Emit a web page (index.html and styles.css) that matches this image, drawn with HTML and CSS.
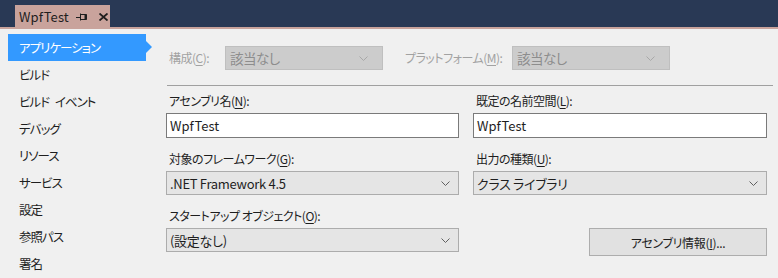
FILE: index.html
```html
<!DOCTYPE html>
<html lang="ja">
  <head>
    <meta charset="UTF-8" />
    <title>WpfTest</title>
    <link rel="stylesheet" href="styles.css">
  </head>
  <body>
    <header class="tab-bar">
      <div class="doc-tab">
        <span class="tab-title">WpfTest</span>
        <svg class="pin" width="12" height="8" viewBox="0 0 12 8">
          <path d="M0 4.5H4M4.5 0.5V7.5M4.5 1.5H10.5V6.5H4.5" fill="none" stroke="#1e1e1e" stroke-width="1"/>
          <path d="M9.5 1.5V6.5" stroke="#1e1e1e" stroke-width="2"/>
        </svg>
        <svg class="close" width="9" height="8" viewBox="0 0 9 8">
          <path d="M0.5 0.5L8.5 7.5M8.5 0.5L0.5 7.5" stroke="#1e1e1e" stroke-width="1.8"/>
        </svg>
      </div>
    </header>

    <div class="page">
      <ul class="side-nav">
        <li class="active">アプリケーション</li>
        <li>ビルド</li>
        <li>ビルド イベント</li>
        <li>デバッグ</li>
        <li>リソース</li>
        <li>サービス</li>
        <li>設定</li>
        <li>参照パス</li>
        <li>署名</li>
      </ul>

      <main class="settings">
        <div class="config-row">
          <span class="label disabled">構成(<u>C</u>):</span>
          <div class="combo combo-disabled config-combo">
            <span>該当なし</span>
            <svg class="chev" width="9" height="5" viewBox="0 0 9 5"><path d="M0.5 0.5L4.5 4.5L8.5 0.5" fill="none" stroke="#a8a8a8"/></svg>
          </div>
          <span class="label disabled platform">プラットフォーム(<u>M</u>):</span>
          <div class="combo combo-disabled config-combo">
            <span>該当なし</span>
            <svg class="chev" width="9" height="5" viewBox="0 0 9 5"><path d="M0.5 0.5L4.5 4.5L8.5 0.5" fill="none" stroke="#a8a8a8"/></svg>
          </div>
        </div>

        <hr class="separator" />

        <div class="fields">
          <div class="field">
            <label class="label">アセンブリ名(<u>N</u>):</label>
            <div class="textbox">WpfTest</div>
          </div>
          <div class="field">
            <label class="label">既定の名前空間(<u>L</u>):</label>
            <div class="textbox">WpfTest</div>
          </div>
          <div class="field">
            <label class="label">対象のフレームワーク(<u>G</u>):</label>
            <div class="combo">
              <span>.NET Framework 4.5</span>
              <svg class="chev" width="9" height="5" viewBox="0 0 9 5"><path d="M0.5 0.5L4.5 4.5L8.5 0.5" fill="none" stroke="#606060"/></svg>
            </div>
          </div>
          <div class="field">
            <label class="label">出力の種類(<u>U</u>):</label>
            <div class="combo">
              <span>クラス ライブラリ</span>
              <svg class="chev" width="9" height="5" viewBox="0 0 9 5"><path d="M0.5 0.5L4.5 4.5L8.5 0.5" fill="none" stroke="#606060"/></svg>
            </div>
          </div>
          <div class="field">
            <label class="label">スタートアップ オブジェクト(<u>O</u>):</label>
            <div class="combo">
              <span>(設定なし)</span>
              <svg class="chev" width="9" height="5" viewBox="0 0 9 5"><path d="M0.5 0.5L4.5 4.5L8.5 0.5" fill="none" stroke="#606060"/></svg>
            </div>
          </div>
          <div class="field button-field">
            <button type="button" class="btn">アセンブリ情報(<u>I</u>)...</button>
          </div>
        </div>
      </main>
    </div>
  </body>
</html>
```

FILE: styles.css
```css
/* Project properties page */

body {
  margin: 0;
  font-family: "Noto Sans CJK JP", "Noto Sans", sans-serif;
  font-feature-settings: "palt";
  font-size: 12px;
  color: #1e1e1e;
  background-color: #f0f0f0;
  overflow: hidden;
}

.tab-bar {
  height: 27px;
  background-color: #293955;
  border-bottom: 2px solid #c9a39c;
  display: flex;
  align-items: flex-end;
  padding-left: 15px;
}

.doc-tab {
  height: 22px;
  width: 95px;
  box-sizing: border-box;
  background-color: #c9a39c;
  display: flex;
  align-items: center;
  padding-left: 4px;
  font-size: 13px;
}

.tab-title {
  letter-spacing: 0.1px;
}

.pin {
  margin-left: 7px;
  margin-top: 1px;
}

.close {
  margin-left: 11px;
  margin-top: 1px;
}

.page {
  display: flex;
}

.side-nav {
  list-style: none;
  margin: 5px 0 0 8px;
  padding: 0;
  width: 138px;
  flex-shrink: 0;
}

.side-nav li {
  height: 27px;
  line-height: 27px;
  padding-left: 11px;
  font-size: 12.5px;
  letter-spacing: -1px;
  word-spacing: 4px;
  position: relative;
}

.side-nav li.active {
  background-color: #3399ff;
  color: #fff;
}

.side-nav li.active::after {
  content: "";
  position: absolute;
  right: -6px;
  top: 7px;
  border-top: 6.5px solid transparent;
  border-bottom: 6.5px solid transparent;
  border-left: 6px solid #3399ff;
}

.settings {
  margin-left: 20px;
  padding-top: 17px;
  width: 607px;
}

.config-row {
  display: flex;
  align-items: center;
  height: 24px;
}

.label {
  display: block;
  line-height: 16px;
  font-size: 12px;
  letter-spacing: -0.5px;
}

.label u {
  text-underline-offset: 2px;
}

.config-row .label {
  padding-left: 3px;
  width: 56px;
}

.config-row .label.platform {
  width: 107px;
  padding-left: 22px;
}

.disabled {
  color: #a2a2a2;
}

.separator {
  border: none;
  border-top: 1px solid #a0a0a0;
  margin: 15px 0 0 1px;
  width: 606px;
}

.fields {
  display: grid;
  grid-template-columns: 293px 294px;
  column-gap: 14px;
  row-gap: 13px;
  margin-top: 7px;
}

.field .label {
  margin: 0 0 4px 3px;
}

.textbox,
.combo {
  box-sizing: border-box;
  height: 24px;
  font-size: 13px;
  display: flex;
  align-items: center;
  padding-left: 3px;
}

.textbox {
  height: 25px;
  background-color: #fff;
  border: 1px solid #7a7a7a;
}

.combo {
  background-color: #e5e5e5;
  border: 1px solid #acacac;
  justify-content: space-between;
  padding-right: 8px;
  letter-spacing: -0.3px;
}

.combo-disabled {
  background-color: #cccccc;
  border-color: #bfbfbf;
  color: #8d8d8d;
}

.config-combo {
  width: 158px;
  font-size: 13.5px;
  letter-spacing: -0.5px;
  padding-left: 4px;
  padding-right: 14px;
}

.chev {
  flex-shrink: 0;
}

.button-field {
  display: flex;
  justify-content: flex-end;
  align-items: flex-start;
  padding-top: 20px;
}

.btn {
  width: 178px;
  height: 28px;
  background-color: #e1e1e1;
  border: 1px solid #adadad;
  font-family: inherit;
  font-feature-settings: "palt";
  font-size: 12px;
  letter-spacing: -0.3px;
  color: #1e1e1e;
  padding: 0;
}
```
